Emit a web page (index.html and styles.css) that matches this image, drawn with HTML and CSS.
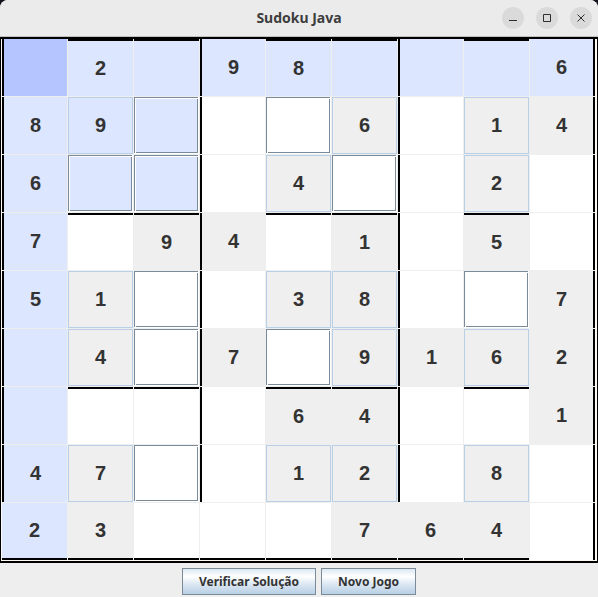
FILE: index.html
```html
<!DOCTYPE html>
<html lang="pt">
<head>
<meta charset="utf-8">
<title>Sudoku Java</title>
<link rel="stylesheet" href="styles.css">
</head>
<body>
<header class="titlebar">
  <h1 class="title">Sudoku Java</h1>
  <div class="controls">
    <button class="control" aria-label="Minimizar"><svg viewBox="0 0 22 22"><path d="M7 13.5h8"/></svg></button>
    <button class="control" aria-label="Maximizar"><svg viewBox="0 0 22 22"><path d="M7.500 7.500h7v7h-7z"/></svg></button>
    <button class="control" aria-label="Fechar"><svg viewBox="0 0 22 22"><path d="M7.500 7.500l7 7M14.500 7.500l-7 7"/></svg></button>
  </div>
</header>
<main class="board">
  <div class="grid">
    <button class="cell open selected" aria-label="Vazio"></button>
    <button class="cell peer" disabled>2</button>
    <button class="cell open peer" aria-label="Vazio"></button>
    <button class="cell peer" disabled>9</button>
    <button class="cell peer" disabled>8</button>
    <button class="cell open peer" aria-label="Vazio"></button>
    <button class="cell open peer" aria-label="Vazio"></button>
    <button class="cell open peer" aria-label="Vazio"></button>
    <button class="cell peer" disabled>6</button>

    <button class="cell peer" disabled>8</button>
    <button class="cell peer" disabled>9</button>
    <button class="cell open peer" aria-label="Vazio"></button>
    <button class="cell open" aria-label="Vazio"></button>
    <button class="cell open" aria-label="Vazio"></button>
    <button class="cell" disabled>6</button>
    <button class="cell open" aria-label="Vazio"></button>
    <button class="cell" disabled>1</button>
    <button class="cell" disabled>4</button>

    <button class="cell peer" disabled>6</button>
    <button class="cell open peer" aria-label="Vazio"></button>
    <button class="cell open peer" aria-label="Vazio"></button>
    <button class="cell open" aria-label="Vazio"></button>
    <button class="cell" disabled>4</button>
    <button class="cell open" aria-label="Vazio"></button>
    <button class="cell open" aria-label="Vazio"></button>
    <button class="cell" disabled>2</button>
    <button class="cell open" aria-label="Vazio"></button>

    <button class="cell peer" disabled>7</button>
    <button class="cell open" aria-label="Vazio"></button>
    <button class="cell" disabled>9</button>
    <button class="cell" disabled>4</button>
    <button class="cell open" aria-label="Vazio"></button>
    <button class="cell" disabled>1</button>
    <button class="cell open" aria-label="Vazio"></button>
    <button class="cell" disabled>5</button>
    <button class="cell open" aria-label="Vazio"></button>

    <button class="cell peer" disabled>5</button>
    <button class="cell" disabled>1</button>
    <button class="cell open" aria-label="Vazio"></button>
    <button class="cell open" aria-label="Vazio"></button>
    <button class="cell" disabled>3</button>
    <button class="cell" disabled>8</button>
    <button class="cell open" aria-label="Vazio"></button>
    <button class="cell open" aria-label="Vazio"></button>
    <button class="cell" disabled>7</button>

    <button class="cell open peer" aria-label="Vazio"></button>
    <button class="cell" disabled>4</button>
    <button class="cell open" aria-label="Vazio"></button>
    <button class="cell" disabled>7</button>
    <button class="cell open" aria-label="Vazio"></button>
    <button class="cell" disabled>9</button>
    <button class="cell" disabled>1</button>
    <button class="cell" disabled>6</button>
    <button class="cell" disabled>2</button>

    <button class="cell open peer" aria-label="Vazio"></button>
    <button class="cell open" aria-label="Vazio"></button>
    <button class="cell open" aria-label="Vazio"></button>
    <button class="cell open" aria-label="Vazio"></button>
    <button class="cell" disabled>6</button>
    <button class="cell" disabled>4</button>
    <button class="cell open" aria-label="Vazio"></button>
    <button class="cell open" aria-label="Vazio"></button>
    <button class="cell" disabled>1</button>

    <button class="cell peer" disabled>4</button>
    <button class="cell" disabled>7</button>
    <button class="cell open" aria-label="Vazio"></button>
    <button class="cell open" aria-label="Vazio"></button>
    <button class="cell" disabled>1</button>
    <button class="cell" disabled>2</button>
    <button class="cell open" aria-label="Vazio"></button>
    <button class="cell" disabled>8</button>
    <button class="cell open" aria-label="Vazio"></button>

    <button class="cell peer" disabled>2</button>
    <button class="cell" disabled>3</button>
    <button class="cell open" aria-label="Vazio"></button>
    <button class="cell open" aria-label="Vazio"></button>
    <button class="cell open" aria-label="Vazio"></button>
    <button class="cell" disabled>7</button>
    <button class="cell" disabled>6</button>
    <button class="cell" disabled>4</button>
    <button class="cell open" aria-label="Vazio"></button>
  </div>
</main>
<footer class="actions">
  <button class="action">Verificar Solução</button>
  <button class="action">Novo Jogo</button>
</footer>
</body>
</html>
```

FILE: styles.css
```css
* {
  box-sizing: border-box;
}

html {
  background: #14101c;
}

body {
  margin: 0;
  min-height: 100vh;
  display: flex;
  flex-direction: column;
  overflow: hidden;
  border-radius: 8px 8px 0 0;
  background: #eeeeee;
  color: #333333;
  font-family: "Noto Sans", sans-serif;
}

button {
  margin: 0;
  padding: 0;
  border: 0;
  color: inherit;
  font: inherit;
}

.titlebar {
  display: grid;
  grid-template-columns: 1fr auto 1fr;
  align-items: center;
  height: 37px;
  padding: 0 6px;
  border-bottom: 1px solid #bfbfbf;
  background: #ebebeb;
}

.title {
  grid-column: 2;
  margin: 0;
  color: #3d3d3d;
  font-size: 14px;
  font-weight: 700;
  line-height: 20px;
}

.controls {
  display: flex;
  justify-content: flex-end;
  gap: 12px;
}

.control {
  width: 22px;
  height: 22px;
  border-radius: 50%;
  background: #dadada;
}

.control svg {
  display: block;
  fill: none;
  stroke: #2e2e2e;
  stroke-width: 1;
}

.board {
  flex: 1;
  display: flex;
  padding: 0 2px 1px 1px;
  border: solid #000000;
  border-width: 2px 1px;
  background: #fdf8f0;
}

.grid {
  flex: 1;
  display: grid;
  grid-template-columns: repeat(9, 1fr);
  grid-auto-rows: 1fr;
  gap: 1px;
  background: #eeeeee;
}

.cell {
  min-height: 57px;
  border: 1px solid #b8cfe5;
  background: #efefef;
  color: #333333;
  font-family: "Liberation Sans", sans-serif;
  font-size: 20px;
  font-weight: 700;
}

.open {
  border: 0;
  background: #ffffff;
  box-shadow:
    inset -1px -1px 0 #ffffff,
    inset 1px 1px 0 #7a8a99,
    inset 2px 2px 0 #ffffff,
    inset -2px -2px 0 #7a8a99;
}

.peer {
  background: #dce6ff;
}

.selected {
  background: #b4c5ff;
}

/* Heavy rule above each band of three rows */
.cell:nth-child(-n+9),
.cell:nth-child(n+28):nth-child(-n+36),
.cell:nth-child(n+55):nth-child(-n+63) {
  border: 0 solid #000000;
  border-top-width: 2px;
  box-shadow: none;
}

/* Heavy rule left of each band of three columns */
.cell:nth-child(9n+1):nth-child(n),
.cell:nth-child(9n+4):nth-child(n),
.cell:nth-child(9n+7):nth-child(n) {
  border: 0 solid #000000;
  border-left-width: 2px;
  box-shadow: none;
}

.cell:nth-child(n+73):nth-child(n) {
  border: 0 solid #000000;
  border-bottom-width: 2px;
  box-shadow: none;
}

.cell:nth-child(9n):nth-child(n) {
  border: 0 solid #000000;
  border-right-width: 2px;
  box-shadow: none;
}

.actions {
  display: flex;
  justify-content: center;
  gap: 5px;
  padding: 5px 0 2px;
}

.action {
  height: 27px;
  padding: 0 16px;
  border: 1px solid #7a8a99;
  background: linear-gradient(#dde8f3, #ffffff 30%, #dde8f3 60%, #b8cfe5);
  font-size: 12px;
  font-weight: 700;
}
```
